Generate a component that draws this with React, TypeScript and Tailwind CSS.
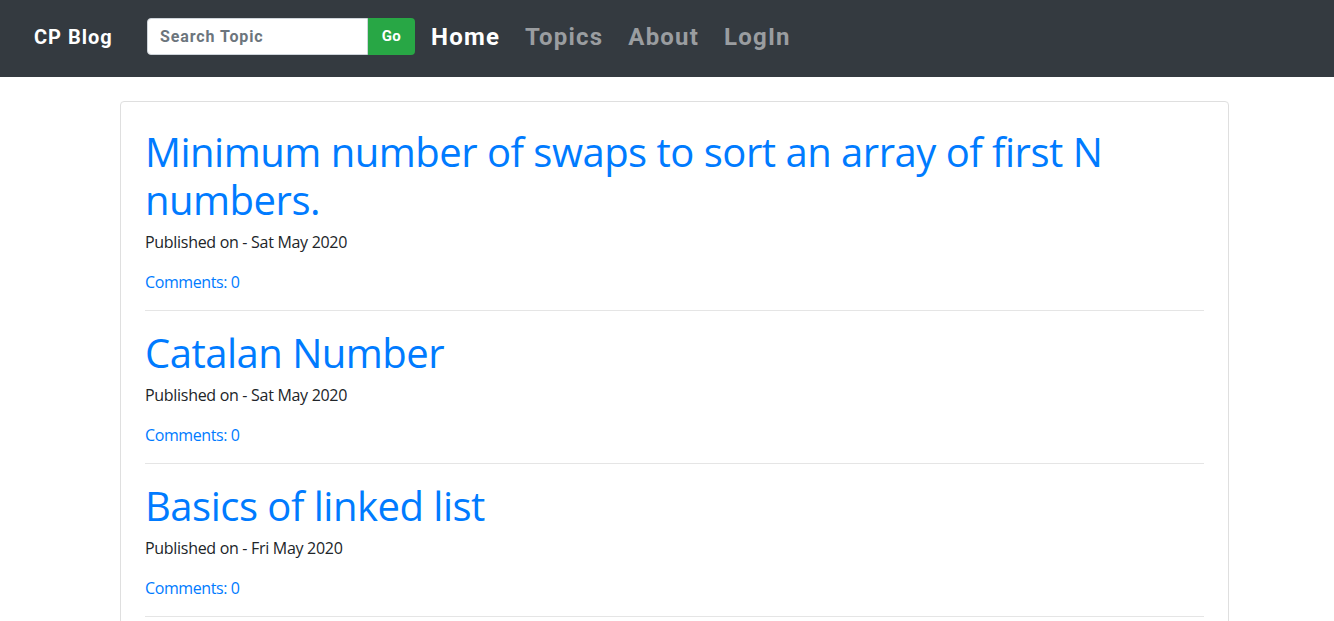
import React from "react";

const posts = [
  { title: "Minimum number of swaps to sort an array of first N numbers.", date: "Sat May 2020" },
  { title: "Catalan Number", date: "Sat May 2020" },
  { title: "Basics of linked list", date: "Fri May 2020" },
];

const navFont = { fontFamily: "Roboto, 'Liberation Sans', sans-serif" };

export default function App() {
  return (
    <div className="min-h-screen bg-white" style={{ fontFamily: "'Open Sans', 'Noto Sans', sans-serif" }}>
      {/* Navbar */}
      <nav className="h-[77px] bg-[#343a40] flex items-center pl-[34px] pb-[4px]" style={navFont}>
        <span className="text-white font-bold text-[20px] tracking-[1px] w-[113px]">CP Blog</span>
        <div className="flex items-center">
          <input
            className="w-[221px] h-[37px] bg-white rounded-l-[4px] border border-[#ced4da] px-3 text-[16px] font-bold tracking-[0.9px] text-[#495057] placeholder:text-[#6c757d] outline-none"
            placeholder="Search Topic"
          />
          <button className="w-[47px] h-[37px] bg-[#28a745] rounded-r-[4px] text-white font-bold text-[15px] tracking-[0.5px]">Go</button>
        </div>
        <div className="flex items-center ml-[16px] text-[24px] font-bold tracking-[1.2px] gap-[25px]">
          <a className="text-white">Home</a>
          <a className="text-[#9a9da0]">Topics</a>
          <a className="text-[#9a9da0]">About</a>
          <a className="text-[#9a9da0]">LogIn</a>
        </div>
      </nav>

      {/* Posts */}
      <div className="px-[120px] pt-[24px] w-[1349px]">
        <div className="border border-[#dfdfdf] rounded-[4px] px-[24px] pt-[24px] pb-[24px]">
          {posts.map((p) => (
            <div key={p.title}>
              <h1 className="text-[40px] leading-[1.2] tracking-[-0.5px] text-[#007bff] font-medium pt-[2px] mb-[6px]">{p.title}</h1>
              <p className="text-[16px] leading-[24px] tracking-[-0.3px] text-[#212529] mb-[16px]">Published on - {p.date}</p>
              <a className="block text-[16px] leading-[24px] tracking-[-0.4px] text-[#007bff]">Comments: 0</a>
              <hr className="mt-[16px] mb-[16px] border-0 border-t border-[#e5e5e5]" />
            </div>
          ))}
        </div>
      </div>
    </div>
  );
}
